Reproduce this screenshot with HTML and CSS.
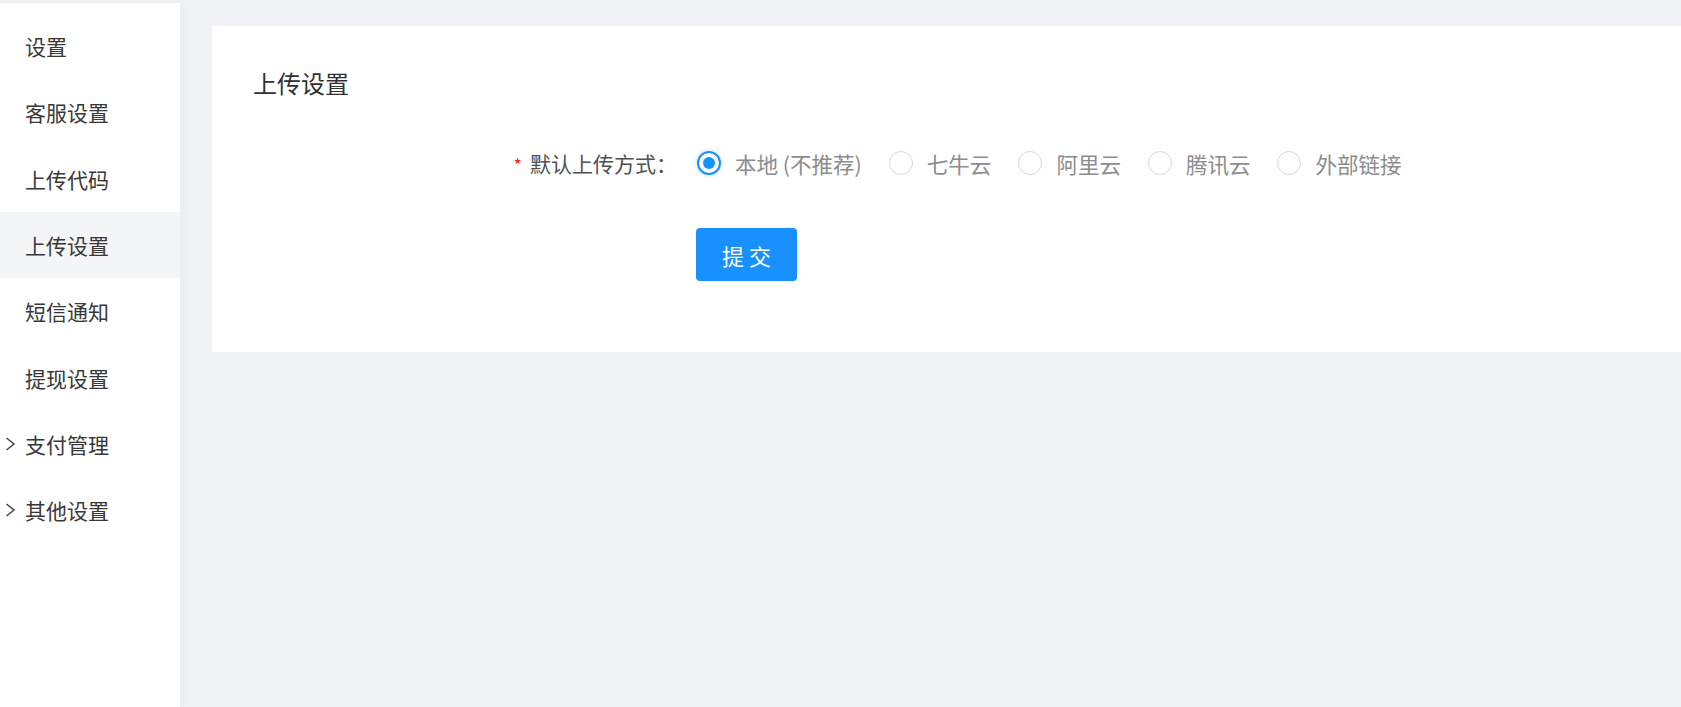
FILE: index.html
```html
<!DOCTYPE html>
<html lang="zh">
<head>
<meta charset="utf-8">
<title>上传设置</title>
<link rel="stylesheet" href="styles.css">
</head>
<body>
<div class="layout">
  <aside class="sidebar">
    <ul class="menu">
      <li class="menu-item"><span class="arrow"></span><span class="label">设置</span></li>
      <li class="menu-item"><span class="arrow"></span><span class="label">客服设置</span></li>
      <li class="menu-item"><span class="arrow"></span><span class="label">上传代码</span></li>
      <li class="menu-item active"><span class="arrow"></span><span class="label">上传设置</span></li>
      <li class="menu-item"><span class="arrow"></span><span class="label">短信通知</span></li>
      <li class="menu-item"><span class="arrow"></span><span class="label">提现设置</span></li>
      <li class="menu-item"><span class="arrow"><svg width="11" height="16" viewBox="0 0 11 16"><polyline points="1.5,2 9,8 1.5,14" fill="none" stroke="#444" stroke-width="1.5"/></svg></span><span class="label">支付管理</span></li>
      <li class="menu-item"><span class="arrow"><svg width="11" height="16" viewBox="0 0 11 16"><polyline points="1.5,2 9,8 1.5,14" fill="none" stroke="#444" stroke-width="1.5"/></svg></span><span class="label">其他设置</span></li>
    </ul>
  </aside>
  <main class="main">
    <section class="card">
      <h2 class="card-title">上传设置</h2>
      <div class="form-row">
        <label class="form-label"><span class="req">*</span>默认上传方式：</label>
        <div class="radio-group">
          <label class="radio checked"><span class="radio-dot"></span><span class="radio-text">本地 (不推荐)</span></label>
          <label class="radio"><span class="radio-dot"></span><span class="radio-text">七牛云</span></label>
          <label class="radio"><span class="radio-dot"></span><span class="radio-text">阿里云</span></label>
          <label class="radio"><span class="radio-dot"></span><span class="radio-text">腾讯云</span></label>
          <label class="radio"><span class="radio-dot"></span><span class="radio-text">外部链接</span></label>
        </div>
      </div>
      <div class="form-actions">
        <button class="btn-primary">提 交</button>
      </div>
    </section>
  </main>
</div>
</body>
</html>
```

FILE: styles.css
```css
* { box-sizing: border-box; }
html, body { margin: 0; padding: 0; }
body {
  background: #f0f2f5;
  font-family: "Noto Sans CJK SC", "Noto Sans", sans-serif;
  color: #333;
  height: 707px;
  overflow: hidden;
}
.layout {
  display: flex;
  height: 707px;
  padding-top: 3px;
}
.sidebar {
  width: 180px;
  flex: none;
  background: #fff;
  box-shadow: 3px 0 8px rgba(0, 0, 0, 0.03);
  padding-top: 10px;
  position: relative;
  z-index: 1;
}
.menu { list-style: none; margin: 0; padding: 0; }
.menu-item {
  height: 66.3px;
  display: flex;
  align-items: center;
  font-size: 21px;
  color: #383838;
}
.menu-item.active { background: #f4f5f7; }
.arrow {
  width: 25px;
  flex: none;
  display: flex;
  justify-content: flex-start;
  padding-left: 5px;
  align-items: center;
}
.arrow svg { display: block; }
.main {
  flex: 1;
  padding: 23px 0 0 32px;
  min-width: 0;
}
.card {
  background: #fff;
  height: 326px;
  padding: 41px 0 0 41px;
}
.card-title {
  margin: 0;
  font-size: 24px;
  font-weight: normal;
  line-height: 32px;
  color: #303133;
}
.form-row {
  display: flex;
  align-items: center;
  height: 40px;
  margin-top: 44px;
}
.form-label {
  width: 443px;
  flex: none;
  text-align: right;
  padding-right: 19px;
  font-size: 21px;
  color: #505050;
}
.req {
  color: #f5222d;
  margin-right: 8px;
  font-size: 18px;
}
.radio-group {
  display: flex;
  align-items: center;
  margin-left: 1px;
}
.radio {
  display: flex;
  align-items: center;
  margin-right: 27px;
  font-size: 21.5px;
  color: #8c8c8c;
}
.radio-dot {
  width: 24px;
  height: 24px;
  border-radius: 50%;
  border: 1px solid #d4d6db;
  background: #fff;
  flex: none;
  position: relative;
}
.radio.checked .radio-dot {
  border: 2px solid #1890ff;
  box-shadow: 0 0 2px 2px rgba(24, 144, 255, 0.12);
}
.radio.checked .radio-dot::after {
  content: "";
  position: absolute;
  left: 50%;
  top: 50%;
  width: 12px;
  height: 12px;
  margin: -6px 0 0 -6px;
  border-radius: 50%;
  background: #1890ff;
}
.radio-text { margin-left: 14px; }
.form-actions {
  margin-top: 45px;
  padding-left: 443px;
}
.btn-primary {
  width: 101px;
  height: 53px;
  border: none;
  border-radius: 4px;
  background: #1890ff;
  color: #fff;
  font-family: inherit;
  font-size: 22px;
  cursor: pointer;
}
```
